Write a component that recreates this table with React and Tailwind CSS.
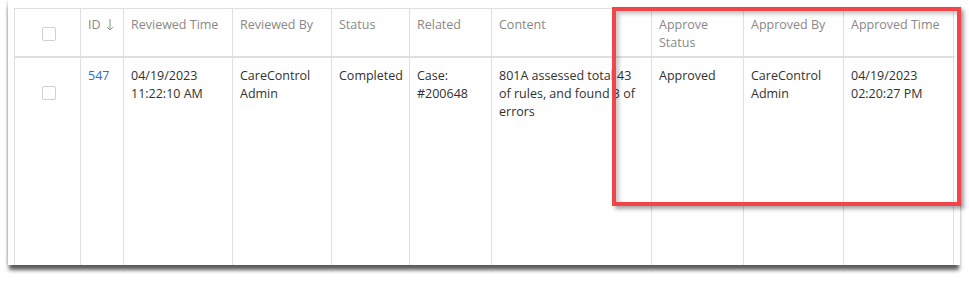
import React from "react";

const cols = [
  { w: "w-[66px]" },
  { w: "w-[43px]" },
  { w: "w-[109px]" },
  { w: "w-[99px]" },
  { w: "w-[78px]" },
  { w: "w-[82px]" },
  { w: "w-[160px]" },
  { w: "w-[92px]" },
  { w: "w-[100px]" },
  { w: "w-[111px]" },
];

function Checkbox() {
  return (
    <div className="w-[14px] h-[14px] rounded-[2px] border border-[#d2d0ce] bg-white" />
  );
}

const headers = [
  null,
  "ID",
  "Reviewed Time",
  "Reviewed By",
  "Status",
  "Related",
  "Content",
  "Approve Status",
  "Approved By",
  "Approved Time",
];

const row = [
  null,
  "547",
  ["04/19/2023", "11:22:10 AM"],
  ["CareControl", "Admin"],
  ["Completed"],
  ["Case:", "#200648"],
  ["801A assessed total 43", "of rules, and found 3 of", "errors"],
  ["Approved"],
  ["CareControl", "Admin"],
  ["04/19/2023", "02:20:27 PM"],
];

export default function App() {
  return (
    <div
      className="relative w-[969px] h-[281px] bg-white overflow-hidden"
      style={{ fontFamily: '"Open Sans", "Noto Sans", sans-serif' }}
    >
      {/* framed table with edge shadow */}
      <div className="ml-[8px] w-[952px] h-[265px] bg-white shadow-[0_6px_4px_-1px_rgba(0,0,0,0.65),-2px_0_2px_-1px_rgba(0,0,0,0.15)] pl-[6px] pt-[8px]">
        <div className="w-[941px] h-[257px] flex flex-col border-t border-[#e1dfdd]">
          {/* header */}
          <div className="flex h-[49px] border-b-2 border-[#e1dfdd]">
            {cols.map((c, i) => (
              <div
                key={i}
                className={`${c.w} shrink-0 border-l border-[#e1dfdd] ${
                  i === cols.length - 1 ? "border-r" : ""
                } text-[12.5px] leading-[18px] text-[#8a8886] pl-[7px] pr-[4px] pt-[7px]`}
              >
                {i === 0 ? (
                  <div className="flex justify-center pt-[11px]">
                    <Checkbox />
                  </div>
                ) : i === 1 ? (
                  <span className="flex items-center gap-[5px]">
                    ID
                    <svg width="8" height="14" viewBox="0 0 8 14">
                      <path
                        d="M4 1v11M1.2 9.2l2.8 2.8 2.8-2.8"
                        stroke="#7f9c86"
                        strokeWidth="1"
                        fill="none"
                      />
                    </svg>
                  </span>
                ) : (
                  headers[i]
                )}
              </div>
            ))}
          </div>
          {/* body row */}
          <div className="flex flex-1">
            {cols.map((c, i) => (
              <div
                key={i}
                className={`${c.w} shrink-0 border-l border-[#e1dfdd] ${
                  i === cols.length - 1 ? "border-r" : ""
                } text-[12.5px] leading-[18px] text-[#323130] pl-[7px] pr-[4px] pt-[9px]`}
              >
                {i === 0 ? (
                  <div className="flex justify-center pt-[19px]">
                    <Checkbox />
                  </div>
                ) : i === 1 ? (
                  <span className="text-[#2b6fd0]">{row[i]}</span>
                ) : (
                  row[i].map((l, k) => (
                    <div key={k} className="whitespace-nowrap">
                      {l}
                    </div>
                  ))
                )}
              </div>
            ))}
          </div>
        </div>
      </div>

      {/* red highlight box */}
      <div className="absolute left-[612px] top-[7px] w-[349px] h-[199px] border-4 border-[#f2454a] shadow-[3px_3px_4px_rgba(0,0,0,0.35),inset_3px_3px_4px_rgba(0,0,0,0.22)]" />
    </div>
  );
}
